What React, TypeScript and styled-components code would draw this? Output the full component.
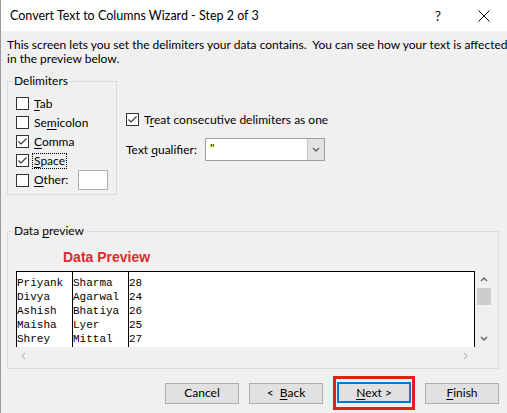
import React from "react";
import styled, { createGlobalStyle } from "styled-components";

const Global = createGlobalStyle`
  html, body { margin: 0; padding: 0; background: #f0f0f0; }
  body { font-family: "Segoe UI", Lato, "Noto Sans", sans-serif; font-size: 12px; line-height: 14px; color: #000; }
  * { box-sizing: border-box; }
`;

const Window = styled.div`
  width: 507px;
  height: 413px;
  display: flex;
  flex-direction: column;
  background: #f0f0f0;
  border-left: 1px solid #9a9a9a;
  overflow: hidden;
`;

const TitleBar = styled.div`
  height: 31px;
  background: #fff;
  display: flex;
  align-items: center;
  padding-left: 9px;
  flex-shrink: 0;
`;

const Title = styled.div`
  flex: 1;
  font-size: 12.5px;
  padding-top: 1px;
`;

const TitleButton = styled.div<{ $w: number }>`
  width: ${(p) => p.$w}px;
  height: 31px;
  display: flex;
  align-items: center;
  justify-content: center;
  font-size: 14px;
  color: #111;
`;

const Body = styled.div`
  flex: 1;
  padding: 7px 8px 0 6px;
  display: flex;
  flex-direction: column;
`;

const Description = styled.div`
  line-height: 14px;
  font-size: 12px;
  white-space: nowrap;
`;

const OptionsRow = styled.div`
  display: flex;
  margin-top: 8px;
  gap: 9px;
`;

const GroupBox = styled.fieldset<{ $w: number; $h: number }>`
  margin: 0;
  width: ${(p) => p.$w}px;
  height: ${(p) => p.$h}px;
  border: 1px solid #dcdcdc;
  padding: 0 8px;
  min-width: 0;
`;

const Legend = styled.legend`
  padding: 0 1px;
  margin-left: -3px;
  line-height: 14px;
  height: 14px;
  font-size: 12px;
`;

const CheckList = styled.div`
  display: flex;
  flex-direction: column;
  padding-top: 6px;
`;

const CheckRow = styled.div<{ $h?: number }>`
  display: flex;
  align-items: center;
  height: ${(p) => p.$h ?? 19}px;
  gap: 4px;
`;

const Box = styled.span`
  width: 13px;
  height: 13px;
  border: 1px solid #333;
  background: #fff;
  display: inline-flex;
  align-items: center;
  justify-content: center;
  flex-shrink: 0;
`;

const Label = styled.span<{ $focus?: boolean }>`
  line-height: 14px;
  padding: 0 1px;
  outline: ${(p) => (p.$focus ? "1px dotted #000" : "none")};
`;

const Key = styled.span`
  text-decoration: underline;
  text-underline-offset: 2px;
`;

const SmallInput = styled.span`
  width: 30px;
  height: 20px;
  margin-left: 5px;
  background: #fff;
  border: 1px solid #adadad;
`;

const RightColumn = styled.div`
  display: flex;
  flex-direction: column;
  padding-top: 36px;
  gap: 9px;
`;

const QualifierRow = styled.div`
  display: flex;
  align-items: center;
  gap: 8px;
`;

const Select = styled.div`
  width: 120px;
  height: 23px;
  border: 1px solid #a0a0a0;
  background: #fff;
  display: flex;
`;

const SelectValue = styled.div`
  flex: 1;
  padding-left: 4px;
  line-height: 18px;
  font-size: 12px;
`;

const SelectButton = styled.div`
  width: 17px;
  background: #e3e3e3;
  border-left: 1px solid #c8c8c8;
  display: flex;
  align-items: center;
  justify-content: center;
`;

const PreviewGroup = styled(GroupBox)`
  margin-top: 29px;
`;

const Annotation = styled.div`
  color: #e02a2e;
  font-family: "Liberation Sans", Arial, sans-serif;
  font-weight: bold;
  font-size: 14px;
  line-height: 18px;
  height: 18px;
  margin: 10px 0 5px 47px;
`;

const PreviewGrid = styled.div`
  display: grid;
  grid-template-columns: 459px 17px;
  grid-template-rows: 76px 17px;
`;

const DataBox = styled.div`
  background: #fff;
  border: 1px solid #000;
  border-bottom: none;
  display: flex;
  overflow: hidden;
`;

const DataColumn = styled.div<{ $w?: number; $last?: boolean }>`
  width: ${(p) => (p.$w ? `${p.$w}px` : "auto")};
  flex: ${(p) => (p.$last ? 1 : "none")};
  border-right: ${(p) => (p.$last ? "none" : "1px solid #000")};
  padding: 4px 0 0 0;
  font-family: "Liberation Mono", "Courier New", monospace;
  font-size: 11px;
  line-height: 14px;
  white-space: pre;
`;

const VScroll = styled.div`
  background: #f0f0f0;
  display: flex;
  flex-direction: column;
  align-items: center;
  padding: 5px 0 4px;
  gap: 4px;
`;

const Thumb = styled.div`
  width: 14px;
  height: 17px;
  background: #cdcdcd;
  margin-left: 1px;
`;

const HScroll = styled.div`
  display: flex;
  justify-content: space-between;
  align-items: center;
  padding: 0 5px 0 4px;
`;

const ButtonRow = styled.div`
  display: flex;
  justify-content: flex-end;
  align-items: center;
  gap: 10px;
  margin-top: 7px;
`;

const Button = styled.div<{ $default?: boolean }>`
  width: 74px;
  height: 21px;
  background: #e1e1e1;
  border: ${(p) => (p.$default ? "2px solid #0078d7" : "1px solid #adadad")};
  display: flex;
  align-items: center;
  justify-content: center;
  font-size: 12px;
  white-space: pre;
`;

const Highlight = styled.div`
  border: 3px solid #e0201f;
  padding: 3px 1px 4px;
`;

const Check = () => (
  <svg width="11" height="11" viewBox="0 0 11 11">
    <path d="M1.5 5.5 L4 8 L9.5 2.5" fill="none" stroke="#333" strokeWidth="1.1" />
  </svg>
);

const Chevron = ({ dir }: { dir: "up" | "down" | "left" | "right" }) => {
  const paths: Record<string, string> = {
    up: "M1 5 L4 2 L7 5",
    down: "M1 2 L4 5 L7 2",
    left: "M5 1 L2 4 L5 7",
    right: "M2 1 L5 4 L2 7",
  };
  const active = dir === "up" || dir === "down";
  return (
    <svg width="8" height="8" viewBox="0 0 8 8">
      <path d={paths[dir]} fill="none" stroke={active ? "#606060" : "#c3c3c3"} strokeWidth="1.4" />
    </svg>
  );
};

const CheckItem = ({
  checked,
  children,
  focus,
}: {
  checked?: boolean;
  children: React.ReactNode;
  focus?: boolean;
}) => (
  <CheckRow>
    <Box>{checked && <Check />}</Box>
    <Label $focus={focus}>{children}</Label>
  </CheckRow>
);

const rows = [
  ["Priyank", "Sharma", "28"],
  ["Divya", "Agarwal", "24"],
  ["Ashish", "Bhatiya", "26"],
  ["Maisha", "Lyer", "25"],
  ["Shrey", "Mittal", "27"],
];

export default function App() {
  return (
    <>
      <Global />
      <Window>
        <TitleBar>
          <Title>Convert Text to Columns Wizard - Step 2 of 3</Title>
          <TitleButton $w={46}>?</TitleButton>
          <TitleButton $w={46}>
            <svg width="12" height="12" viewBox="0 0 12 12">
              <path d="M0.5 0.5 L11.5 11.5 M11.5 0.5 L0.5 11.5" stroke="#111" strokeWidth="1" />
            </svg>
          </TitleButton>
        </TitleBar>
        <Body>
          <Description>
            This screen lets you set the delimiters your data contains.&nbsp; You can see how your text is affected
            <br />
            in the preview below.
          </Description>
          <OptionsRow>
            <GroupBox $w={110} $h={121}>
              <Legend>Delimiters</Legend>
              <CheckList>
                <CheckItem>
                  <Key>T</Key>ab
                </CheckItem>
                <CheckItem>
                  Se<Key>m</Key>icolon
                </CheckItem>
                <CheckItem checked>
                  <Key>C</Key>omma
                </CheckItem>
                <CheckItem checked focus>
                  <Key>S</Key>pace
                </CheckItem>
                <CheckRow $h={20}>
                  <Box />
                  <Label>
                    <Key>O</Key>ther:
                  </Label>
                  <SmallInput />
                </CheckRow>
              </CheckList>
            </GroupBox>
            <RightColumn>
              <CheckItem checked>
                T<Key>r</Key>eat consecutive delimiters as one
              </CheckItem>
              <QualifierRow>
                <span>
                  Text <Key>q</Key>ualifier:
                </span>
                <Select>
                  <SelectValue>"</SelectValue>
                  <SelectButton>
                    <Chevron dir="down" />
                  </SelectButton>
                </Select>
              </QualifierRow>
            </RightColumn>
          </OptionsRow>
          <PreviewGroup $w={492} $h={145}>
            <Legend>
              Data <Key>p</Key>review
            </Legend>
            <Annotation>Data Preview</Annotation>
            <PreviewGrid>
              <DataBox>
                {[0, 1, 2].map((c) => (
                  <DataColumn key={c} $w={c === 2 ? undefined : 56} $last={c === 2}>
                    {rows.map((r) => r[c]).join("\n")}
                  </DataColumn>
                ))}
              </DataBox>
              <VScroll>
                <Chevron dir="up" />
                <Thumb />
                <div style={{ flex: 1 }} />
                <Chevron dir="down" />
              </VScroll>
              <HScroll>
                <Chevron dir="left" />
                <Chevron dir="right" />
              </HScroll>
            </PreviewGrid>
          </PreviewGroup>
          <ButtonRow>
            <Button>Cancel</Button>
            <Button>
              {"<  "}
              <Key>B</Key>ack
            </Button>
            <Highlight>
              <Button $default>
                <Key>N</Key>ext &gt;
              </Button>
            </Highlight>
            <Button>
              <Key>F</Key>inish
            </Button>
          </ButtonRow>
        </Body>
      </Window>
    </>
  );
}
